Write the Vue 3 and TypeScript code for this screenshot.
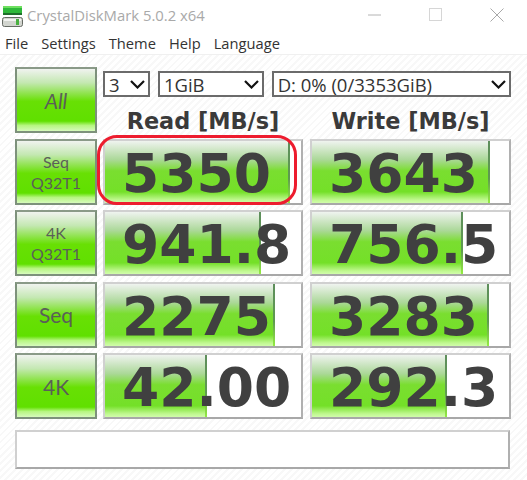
<script setup lang="ts">
interface Cell { text: string; pct: number }
interface Row { label: string[]; big: boolean; read: Cell; write: Cell }
const rows: Row[] = [
  { label: ['Seq', 'Q32T1'], big: false, read: { text: '5350', pct: 94.4 }, write: { text: '3643', pct: 90.4 } },
  { label: ['4K', 'Q32T1'], big: false, read: { text: '941.8', pct: 79.6 }, write: { text: '756.5', pct: 76.6 } },
  { label: ['Seq'], big: true, read: { text: '2275', pct: 86.7 }, write: { text: '3283', pct: 90 } },
  { label: ['4K'], big: true, read: { text: '42.00', pct: 52 }, write: { text: '292.3', pct: 68.5 } },
]
</script>

<template>
  <div class="window">
    <div class="titlebar">
      <svg class="logo" width="23" height="24" viewBox="0 0 23 24">
        <rect x="2" y="3" width="19" height="7" fill="#2fb83a" />
        <rect x="2" y="3" width="19" height="2" fill="#6fe060" />
        <rect x="2" y="10" width="19" height="2" fill="#1f6f2a" />
        <rect x="1.5" y="14.5" width="20" height="9" rx="2" fill="#d2d5cf" stroke="#666b64" />
        <rect x="3" y="16" width="17" height="2" fill="#f2f3f0" />
        <rect x="15" y="16" width="3" height="6" fill="#49b040" />
      </svg>
      <span class="title">CrystalDiskMark 5.0.2 x64</span>
      <div class="controls">
        <svg width="14" height="14" viewBox="0 0 14 14"><path d="M0 7H13" stroke="#b4b4b4" fill="none" /></svg>
        <svg width="14" height="14" viewBox="0 0 14 14"><rect x="0.5" y="0.5" width="12" height="12" stroke="#d6d6d6" fill="none" /></svg>
        <svg width="14" height="14" viewBox="0 0 14 14"><path d="M0.5 0.5L13.5 13.5M13.5 0.5L0.5 13.5" stroke="#a8a8a8" fill="none" /></svg>
      </div>
    </div>
    <nav class="menu">
      <span>File</span><span>Settings</span><span>Theme</span><span>Help</span><span>Language</span>
    </nav>
    <main class="panel">
      <div class="grid">
        <button class="btn all"><span>All</span></button>
        <div class="head">
          <div class="selects">
            <div class="sel s1"><span>3</span><svg width="15" height="9" viewBox="0 0 15 9"><path d="M1 1L7.5 7.5L14 1" stroke="#111" stroke-width="2.2" fill="none" /></svg></div>
            <div class="sel s2"><span>1GiB</span><svg width="15" height="9" viewBox="0 0 15 9"><path d="M1 1L7.5 7.5L14 1" stroke="#111" stroke-width="2.2" fill="none" /></svg></div>
            <div class="sel s3"><span>D: 0% (0/3353GiB)</span><svg width="15" height="9" viewBox="0 0 15 9"><path d="M1 1L7.5 7.5L14 1" stroke="#111" stroke-width="2.2" fill="none" /></svg></div>
          </div>
          <div class="cols">
            <div class="coltitle">Read [MB/s]</div>
            <div class="coltitle">Write [MB/s]</div>
          </div>
        </div>
        <template v-for="row in rows" :key="row.label.join()">
          <button class="btn" :class="{ big: row.big }"><span v-for="l in row.label" :key="l">{{ l }}</span></button>
          <div class="cols">
            <div class="cell">
              <div class="fill" :style="{ width: row.read.pct + '%' }"></div>
              <span class="num">{{ row.read.text }}</span>
            </div>
            <div class="cell">
              <div class="fill" :style="{ width: row.write.pct + '%' }"></div>
              <span class="num">{{ row.write.text }}</span>
            </div>
          </div>
        </template>
      </div>
      <div class="comment"></div>
      <div class="annotation"></div>
    </main>
  </div>
</template>

<style>
html, body { background: #fff; }
</style>

<style scoped>
.window {
  width: 527px;
  height: 480px;
  overflow: hidden;
  display: flex;
  flex-direction: column;
  font-family: "Open Sans", sans-serif;
  background: #fff;
}
.titlebar {
  height: 30px;
  display: flex;
  align-items: center;
  padding-left: 1px;
  flex: none;
}
.logo { flex: none; }
.title {
  margin-left: 3px;
  font-size: 14.85px;
  color: #a9a9a9;
}
.controls {
  margin-left: auto;
  margin-right: 23px;
  display: flex;
  gap: 47px;
}
.menu {
  height: 25px;
  flex: none;
  display: flex;
  align-items: center;
  gap: 13px;
  padding-left: 5px;
  padding-top: 2px;
  font-size: 14.7px;
  color: #333;
  box-sizing: border-box;
  border-bottom: 1px solid #f0f0f0;
}
.panel {
  position: relative;
  flex: 1;
  padding: 12px 16px 0 15px;
  background: repeating-linear-gradient(135deg, #fff 0 3px, #f8f8f8 3px 5px);
}
.grid {
  display: grid;
  grid-template-columns: 82px 408px;
  column-gap: 6px;
  grid-auto-rows: 66px;
  row-gap: 5.5px;
}
.btn {
  padding: 0;
  margin: 0;
  box-sizing: border-box;
  border: 2px solid #7d917b;
  border-top-color: #8a9a88;
  background: linear-gradient(180deg, #f0f3ef 0%, #c4e8b2 22%, #68e004 52%, #60e000 84%, #b6f680 91%, #d6fabc 100%);
  font-family: "Lato", "DejaVu Sans", sans-serif;
  color: #5a5f58;
  font-size: 16px;
  line-height: 21px;
  display: flex;
  flex-direction: column;
  align-items: center;
  justify-content: center;
}
.big { font-size: 21px; }
.all span { font-size: 21px; font-style: italic; }
.head {
  display: flex;
  flex-direction: column;
}
.selects {
  display: flex;
  margin-top: 4px;
  gap: 8px;
}
.sel {
  box-sizing: border-box;
  height: 26px;
  border: 2px solid #6b6b6b;
  background: #fff;
  display: flex;
  align-items: center;
  justify-content: space-between;
  padding: 0 3px 0 4px;
  font-size: 18.5px;
  color: #333;
}
.s1 { width: 47px; }
.s2 { width: 106px; }
.s3 { width: 240px; }
.cols {
  display: grid;
  grid-template-columns: 200px 201px;
  column-gap: 7px;
}
.coltitle {
  margin-top: 12px;
  text-align: center;
  font-family: "DejaVu Sans", sans-serif;
  font-weight: 700;
  font-size: 22.4px;
  line-height: 24px;
  color: #3a3a3a;
}
.cell {
  position: relative;
  box-sizing: border-box;
  height: 66px;
  background: #fff;
  border: 2px solid #d0d0d0;
  border-right-color: #b0b0b0;
  border-bottom-color: #a8a8a8;
  overflow: hidden;
  padding-left: 17px;
}
.fill {
  position: absolute;
  box-sizing: border-box;
  left: 0;
  top: 0;
  bottom: 0;
  background: linear-gradient(180deg, #eff3ef 0%, #abd898 30%, #7ade30 48%, #74e028 82%, #c0f890 95%, #d0fcaa 100%);
  border-right: 2px solid;
  border-image: linear-gradient(180deg, #5e8e5c 0%, #5e9a50 60%, #96f040 100%) 1;
}
.num {
  position: relative;
  font-family: "DejaVu Sans", sans-serif;
  font-weight: 700;
  font-size: 53.5px;
  line-height: 66px;
  color: #404040;
}
.comment {
  box-sizing: border-box;
  height: 39px;
  width: 495px;
  margin-top: 11px;
  background: #fff;
  border: 2px solid #d0d0d0;
  border-right-color: #b0b0b0;
  border-bottom-color: #a8a8a8;
}
.annotation {
  position: absolute;
  left: 97px;
  top: 80px;
  width: 200px;
  height: 70px;
  box-sizing: border-box;
  border: 3.5px solid #ed1c2e;
  border-radius: 20px;
  pointer-events: none;
}
</style>
